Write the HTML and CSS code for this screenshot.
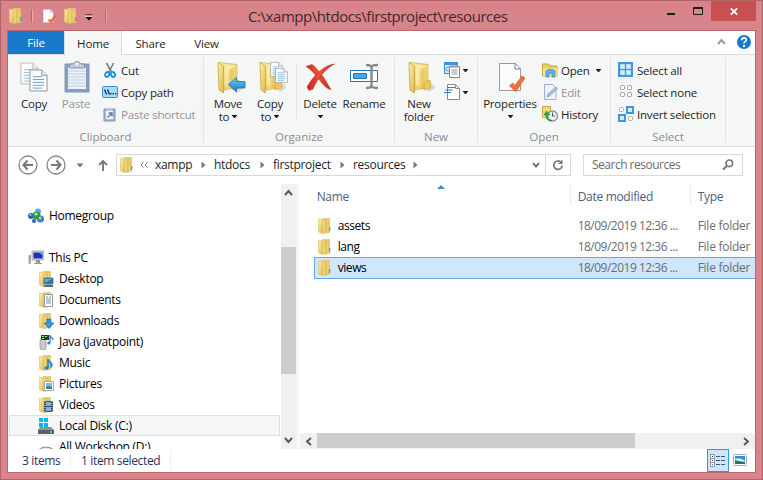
FILE: index.html
```html
<!DOCTYPE html>
<html lang="en">
<head>
<meta charset="utf-8">
<title>C:\xampp\htdocs\firstproject\resources</title>
<link rel="stylesheet" href="styles.css">
</head>
<body>
<svg class="defs" aria-hidden="true">
  <defs>
    <linearGradient id="gold" x1="0" x2="1"><stop offset="0" stop-color="#f9e7a0"/><stop offset=".5" stop-color="#e2bd53"/><stop offset="1" stop-color="#f3d978"/></linearGradient>
    <linearGradient id="gold2" x1="0" x2="1" y1="0" y2="1"><stop offset="0" stop-color="#fff1ae"/><stop offset="1" stop-color="#dcb74a"/></linearGradient>
    <linearGradient id="blue" x1="0" x2="0" y1="0" y2="1"><stop offset="0" stop-color="#68cffc"/><stop offset="1" stop-color="#1478c9"/></linearGradient>
    <linearGradient id="red" x1="0" x2="1"><stop offset="0" stop-color="#c91f14"/><stop offset=".45" stop-color="#f0523d"/><stop offset="1" stop-color="#b52a20"/></linearGradient>
  </defs>
  <symbol id="folder" viewBox="0 0 16 16">
    <path d="M5 .5h7.500v12H5z" fill="#efdb8d" stroke="#dcc273" stroke-width=".7"/>
    <path d="M11.500 7h1.500v8h-1.500z" fill="#edd06a"/><path d="M12 9h1.300v4H12z" fill="#4a9be0"/>
    <path d="M1.500 1L6 2v13.500L1.500 14z" fill="url(#gold2)" stroke="#dfc365" stroke-width=".6"/>
    <path d="M6 2l5.500-1v13.500L6 15.500z" fill="url(#gold)" stroke="#d6b553" stroke-width=".5"/>
  </symbol>
  <symbol id="bigfolder" viewBox="0 0 30 32">
    <path d="M20 29l4-6 3 1 1 3-6 4z" fill="#999" opacity=".35"/>
    <path d="M3 1.500l18 2v23L8 29z" fill="url(#gold2)" stroke="#d3b25a" stroke-width=".8"/>
    <path d="M9 4l10 .5v20H9z" fill="#fff0b5" opacity=".7"/>
    <path d="M13 9l8-5v22l-11 4z" fill="url(#gold)" opacity=".75"/>
    <path d="M17 29v-7l5-3 1.500 1v7z" fill="#eec853" stroke="#c39d3d" stroke-width=".6"/>
    <path d="M2 1.500L7.500 5v27L3 29z" fill="url(#gold2)" stroke="#d0aa4a" stroke-width=".9"/>
  </symbol>
  <symbol id="page" viewBox="0 0 20 24">
    <path d="M1 1h12.500L19 6.500V23H1z" fill="#fff" stroke="#8b8f94"/><path d="M13.500 1v5.500H19" fill="#f2f2f2" stroke="#8b8f94"/>
    <path d="M4 8h10M4 11h12M4 14h12M4 17h12M4 20h10" stroke="#5b9bd5"/>
  </symbol>
  <symbol id="checkpage" viewBox="0 0 28 32">
    <path d="M2 2.500h16l5 5.500v21.500H2z" fill="#fcfcfd" stroke="#97999c"/><path d="M17.500 2.500V8H23" fill="none" stroke="#77797c"/>
    <path d="M12 25l3-3 2.500 2.500L24.500 15l3 2L18.500 30.500z" fill="#ee7140" stroke="#e1602f" stroke-width=".8"/>
  </symbol>
  <symbol id="caret" viewBox="0 0 5 3"><path d="M0 0h5v1H4.500L3 3H2L.5 1H0z" fill="#1e1e1e"/></symbol>
  <symbol id="crumb" viewBox="0 0 5 8"><path d="M.5 .5v7L4.500 4z" fill="#777"/></symbol>
</svg>

<div class="window">
  <header class="titlebar">
    <div class="quick">
      <svg class="i16"><use href="#folder"/></svg><i class="qsep"></i>
      <svg class="i16 qcheck"><use href="#checkpage"/></svg>
      <svg class="i16 qfold"><use href="#folder"/></svg>
      <svg class="qdown" viewBox="0 0 8 7"><path d="M.5 1h7" stroke="#000"/><path d="M0 2h8" stroke="#fff"/><path d="M.5 3h7L4 6.500z"/></svg>
      <i class="qsep"></i>
    </div>
    <h1><span>C:\xampp\htdocs\firstproject\resources</span></h1>
    <div class="controls">
      <svg class="min" viewBox="0 0 8 2"><path d="M0 0h8v2H0z" fill="#1e1e1e"/></svg>
      <svg class="max" viewBox="0 0 10 8"><path d="M.5 1h9v6.500h-9z" fill="none" stroke="#1e1e1e"/><path d="M0 0h10v2H0z" fill="#1e1e1e"/></svg>
      <div class="close"><svg viewBox="0 0 8 7"><path d="M.8 .3l6.400 6.400M7.200 .3L.8 6.700" stroke="#fff" stroke-width="1.700"/></svg></div>
    </div>
  </header>

  <main class="client">
    <nav class="tabs">
      <div class="tab file"><span>File</span></div><div class="tab home"><span>Home</span></div><div class="tab share"><span>Share</span></div><div class="tab view"><span>View</span></div>
      <svg class="collapse" viewBox="0 0 9 7"><path d="M1 6l3.500-4L8 6" fill="none" stroke="#999" stroke-width="1.900"/></svg>
      <svg class="help" viewBox="0 0 14 14"><circle cx="7" cy="7" r="7" fill="#1979ca"/><path d="M4.800 5.200C4.800 2.200 9.500 2.300 9.300 5 9.200 6.700 7 6.500 7 8.500" fill="none" stroke="#fff" stroke-width="1.700"/><path d="M6 10h2v2H6z" fill="#fff"/></svg>
    </nav>

    <section class="ribbon">
      <div class="group clipboard">
        <div class="tools">
          <div class="big w42"><svg class="ico" viewBox="0 0 30 32"><svg x="1" width="19" height="25" opacity=".6"><use href="#page"/></svg><svg x="10" y="7" width="19" height="25"><use href="#page"/></svg></svg><span>Copy</span></div>
          <div class="big w42 off"><svg class="ico" viewBox="0 0 30 32"><path d="M4 3h24v28H4z" fill="#899dc3" stroke="#8294b8"/><path d="M7 6h18v22H7z" fill="#edf2fb"/><path d="M7 10h18M7 13h18M7 16h18M7 19h18M7 22h18M7 25h18" stroke="#bfcbe2"/><path d="M9 3h3q4-5 8 0h3l1 4H8z" fill="#c5cedf" stroke="#8191ae"/><circle cx="16" cy="3" r="1.300" fill="#fff"/></svg><span>Paste</span></div>
          <div class="stack">
            <div class="small"><svg class="i16" viewBox="0 0 16 16"><path d="M4.500 1l5 9M11.500 1L7 10" stroke="#777d85" stroke-width="1.600"/><ellipse cx="5.200" cy="12.500" rx="2" ry="2.600" transform="rotate(30 5.200 12.500)" fill="none" stroke="#168ee0" stroke-width="1.800"/><ellipse cx="11" cy="12.500" rx="2" ry="2.600" transform="rotate(-30 11 12.500)" fill="none" stroke="#168ee0" stroke-width="1.800"/></svg><span>Cut</span></div>
            <div class="small"><svg class="i16" viewBox="0 0 16 16"><rect x=".5" y="2.500" width="15" height="11" rx="1" fill="#a3ddff" stroke="#4389c9"/><path d="M2.500 5.500l2 5M5.500 5.500l2 5" stroke="#1d2b3a" stroke-width="1.300"/><path d="M8 9h1.500v1.500H8zM10.500 9H12v1.500h-1.500zM13 9h1.500v1.500H13z" fill="#26435d"/></svg><span>Copy path</span></div>
            <div class="small off"><svg class="i16" viewBox="0 0 16 16"><path d="M2 3h11v12H2z" fill="#aab6d1" stroke="#8394ba"/><path d="M4 5h7v8H4z" fill="#f6f8fc"/><path d="M5 2.500h5V5H5z" fill="#bbc6dc"/><path d="M5.500 11.500L9.500 7.500M6.500 7h3.500v3.500" stroke="#6279aa" fill="none" stroke-width="1.500"/></svg><span>Paste shortcut</span></div>
          </div>
        </div>
        <div class="caption"><span>Clipboard</span></div>
      </div>

      <div class="group organize">
        <div class="tools">
          <div class="big w42"><svg class="ico shift" viewBox="0 0 30 32"><use href="#bigfolder"/><path d="M12.500 23.500l8-7v4H29v6.500h-8.500v4z" fill="url(#blue)" stroke="#1970b2" stroke-width=".8"/></svg><span>Move</span><span class="second">to<svg class="caret"><use href="#caret"/></svg></span></div>
          <div class="big w42"><svg class="ico shift" viewBox="0 0 30 32"><use href="#bigfolder"/><svg x="12" y="0" width="13" height="17"><use href="#page"/></svg><svg x="17" y="6" width="13" height="17"><use href="#page"/></svg></svg><span>Copy</span><span class="second">to<svg class="caret"><use href="#caret"/></svg></span></div>
          <i class="isep"></i>
          <div class="big w46"><svg class="ico" viewBox="0 0 30 32"><path d="M1 5.500L7 3.500C12 7 15 12 18 15.500C21 20 23 24 26 28.500C21 28 17 22 14.500 19C10 13.500 6 8 1 5.500z" fill="url(#red)" stroke="#b82a20" stroke-width=".5"/><path d="M29.500 3C23 6 13 16 8 28l-4 1.500L2 26C8 15 19 4 29.500 3z" fill="url(#red)" stroke="#b82a20" stroke-width=".5"/></svg><span>Delete</span><svg class="caret lone"><use href="#caret"/></svg></div>
          <div class="big w42"><svg class="ico" viewBox="0 0 30 32"><path d="M1.500 9.500h27v11h-27z" fill="#fff" stroke="#2376ba"/><path d="M4.500 12.500h13v5h-13z" fill="#4da5e4" stroke="#2376ba"/><path d="M17 4q5 0 5.500 2Q23 4 29 4M22.500 5v21M17 27q5 0 5.500-2 .5 2 6.500 2" fill="none" stroke="#888" stroke-width="2.400"/></svg><span>Rename</span></div>
        </div>
        <div class="caption"><span>Organize</span></div>
      </div>

      <div class="group new">
        <div class="tools">
          <div class="big w42"><svg class="ico shift" viewBox="0 0 30 32"><use href="#bigfolder"/></svg><span>New</span><span class="second">folder</span></div>
          <div class="stack">
            <div class="small"><svg class="i16" viewBox="0 0 16 16"><path d="M.5 .5h13v11H.5z" fill="#ddecfb" stroke="#348ad0"/><path d="M0 0h14v3H0z" fill="#3895de"/><circle cx="4" cy="7" r="2" fill="none" stroke="#4899d8"/><path d="M5.500 4.500h10v11h-10z" fill="#fff" stroke="#888"/><path d="M7 3v3M9 3v3M11 3v3M13 3v3M7.500 8h6M7.500 10h6M7.500 12h6" stroke="#9a9a9a"/></svg><svg class="caret"><use href="#caret"/></svg></div>
            <div class="small"><svg class="i16" viewBox="0 0 16 16"><path d="M3.500 .5h8l4 4v11h-12z" fill="#fff" stroke="#8b8b8b"/><path d="M11.500 .5v4h4" fill="none" stroke="#8b8b8b"/><path d="M3 3.500h8M1.500 6h7M0 8.500h7" stroke="#2a7ccc" stroke-width="1.200"/></svg><svg class="caret"><use href="#caret"/></svg></div>
          </div>
        </div>
        <div class="caption"><span>New</span></div>
      </div>

      <div class="group open">
        <div class="tools">
          <div class="big w64"><svg class="ico shift1" viewBox="0 0 30 32"><svg width="29" height="32"><use href="#checkpage"/></svg></svg><span>Properties</span><svg class="caret lone"><use href="#caret"/></svg></div>
          <div class="stack">
            <div class="small"><svg class="i16" viewBox="0 0 16 16"><path d="M.5 2h6l1.500 2H15v10H.5z" fill="#edcd60" stroke="#c8a642"/><path d="M1 6h14v8H1z" fill="#f7e08a"/><path d="M4 15V9q4-3.500 9 0v6h-3v-4H7v4z" fill="#60b5e9" stroke="#368bc4" stroke-width=".8"/></svg><span>Open</span><svg class="caret wide"><use href="#caret"/></svg></div>
            <div class="small off"><svg class="i16" viewBox="0 0 16 16"><path d="M2.500 .5h8l3.500 3.500v11.500H2.500z" fill="#eef2fa" stroke="#9fafd0"/><path d="M5 13l1-3 8-7 1.500 1.500-8 7.500z" fill="#b3c0dc" stroke="#8598c2" stroke-width=".8"/></svg><span>Edit</span></div>
            <div class="small"><svg class="i16" viewBox="0 0 16 16"><path d="M.5 .5h8v11h-8z" fill="#f4d979" stroke="#c8a642"/><circle cx="10.500" cy="10" r="5" fill="#eef1f3" stroke="#8b949c" stroke-width="1.300"/><path d="M10.500 6.500V10H13" stroke="#555" fill="none"/><path d="M9.500 14C6 14 5 11 6 9H8L4.500 5 2 9h2c0 4 2 6 5.500 6z" fill="#26ad30" stroke="#178724" stroke-width=".5"/></svg><span>History</span></div>
          </div>
        </div>
        <div class="caption"><span>Open</span></div>
      </div>

      <div class="group select">
        <div class="tools">
          <div class="stack">
            <div class="small"><svg class="i16" viewBox="0 0 16 16"><path d="M0 0h15v15H0z" fill="#3d96e6"/><path d="M2.500 2.500h4v4h-4zM8.500 2.500h4v4h-4zM2.500 8.500h4v4h-4zM8.500 8.500h4v4h-4z" fill="#d8efff" stroke="#b7dfff"/></svg><span>Select all</span></div>
            <div class="small"><svg class="i16" viewBox="0 0 16 16"><g fill="#fff" stroke="#999"><rect x="2.500" y="1.500" width="4" height="4" rx="1"/><rect x="9.500" y="1.500" width="4" height="4" rx="1"/><rect x="2.500" y="8.500" width="4" height="4" rx="1"/><rect x="9.500" y="8.500" width="4" height="4" rx="1"/></g></svg><span>Select none</span></div>
            <div class="small"><svg class="i16" viewBox="0 0 16 16"><g fill="#fff" stroke="#aaa"><rect x="1.500" y="1.500" width="4" height="4" rx="1"/><rect x="10.500" y="10.500" width="4" height="4" rx="1"/></g><g fill="#d6edff" stroke="#3d96e6" stroke-width="2"><path d="M9 1h6v6H9zM1 9h6v6H1z"/></g></svg><span>Invert selection</span></div>
          </div>
        </div>
        <div class="caption"><span>Select</span></div>
      </div>
    </section>

    <section class="address">
      <svg class="nav" viewBox="0 0 20 20"><circle cx="10" cy="10" r="9" fill="#fff" stroke="#858585" stroke-width="1.300"/><path d="M15 10H6M9.500 5.500L5.500 10l4 4.500" fill="none" stroke="#777" stroke-width="2.100"/></svg>
      <svg class="nav fwd" viewBox="0 0 20 20"><circle cx="10" cy="10" r="9" fill="#fff" stroke="#858585" stroke-width="1.300"/><path d="M5 10h9M10.500 5.500L14.500 10l-4 4.500" fill="none" stroke="#777" stroke-width="2.100"/></svg>
      <svg class="recent" viewBox="0 0 8 5"><path d="M.5 .5h7L4 4.500z" fill="#777"/></svg>
      <svg class="up" viewBox="0 0 10 12"><path d="M5 12V2M1 6l4-4 4 4" fill="none" stroke="#777" stroke-width="1.900"/></svg>
      <div class="path">
        <svg class="i16"><use href="#folder"/></svg>
        <svg class="more" viewBox="0 0 8 6"><path d="M3.500 .5L1 3l2.500 2.500M7.500 .5L5 3l2.500 2.500" fill="none" stroke="#777"/></svg>
        <span class="c1">xampp</span><svg class="crumb"><use href="#crumb"/></svg>
        <span class="c2">htdocs</span><svg class="crumb"><use href="#crumb"/></svg>
        <span class="c3">firstproject</span><svg class="crumb"><use href="#crumb"/></svg>
        <span class="c4">resources</span><svg class="crumb"><use href="#crumb"/></svg>
        <svg class="drop" viewBox="0 0 8 6"><path d="M1 1l3 3.500L7 1" fill="none" stroke="#666" stroke-width="1.800"/></svg>
        <div class="refresh"><svg viewBox="0 0 12 12"><path d="M9 3.200A4.200 4.200 0 1 0 10.200 6.500" fill="none" stroke="#777" stroke-width="1.700"/><path d="M10.500 .5V5H6z" fill="#777"/></svg></div>
      </div>
      <div class="search"><span>Search resources</span><svg viewBox="0 0 12 12"><circle cx="7.300" cy="4.300" r="3.300" fill="none" stroke="#777" stroke-width="1.600"/><path d="M5 7L1 10.500" stroke="#777" stroke-width="2"/></svg></div>
    </section>

    <section class="panes">
      <aside class="tree">
        <div class="node root"><svg class="i16" viewBox="0 0 16 16"><circle cx="10" cy="3.500" r="3" fill="#65a9e6"/><circle cx="3" cy="8" r="3" fill="#2465bd"/><circle cx="12.500" cy="11" r="3.600" fill="#4781d2"/><circle cx="6" cy="13" r="2" fill="#315fb0"/><circle cx="8.500" cy="7.500" r="4" fill="#2c9d42"/><circle cx="8" cy="6" r="1.500" fill="#adecaa"/><circle cx="2.500" cy="7" r="1" fill="#b4d8fa"/><circle cx="12" cy="10" r="1.200" fill="#c3defa"/></svg><span>Homegroup</span></div>
        <div class="node gap"></div>
        <div class="node root"><svg class="i16" viewBox="0 0 16 16"><path d="M4 1h12v9H4z" fill="#d4d7da" stroke="#9b9ea2" stroke-width=".8"/><path d="M5.500 2.500h9v6h-9z" fill="#1830b8"/><path d="M10 2.500h4.500V5z" fill="#6e9ef1"/><path d="M8 10h4v3h2v1H6v-1h2z" fill="#999"/><path d="M.5 5h2.500v9H.5z" fill="#a9adb1"/><path d="M1 6h1v2H1z" fill="#35ca45"/></svg><span>This PC</span></div>
        <div class="node"><svg class="i16" viewBox="0 0 16 16"><use href="#folder"/><path d="M6 7h9v6H6z" fill="#2372bd" stroke="#6d7d8b"/><path d="M7 8h7l-7 4z" fill="#68abe0"/><path d="M7 14h8v2H5z" fill="#536b8b"/></svg><span>Desktop</span></div>
        <div class="node"><svg class="i16" viewBox="0 0 16 16"><use href="#folder"/><path d="M6.500 2.500h8v12h-8z" fill="#fff" stroke="#999"/><path d="M8 5h2M11 5h2M8 7h5M8 9h5M8 11h5" stroke="#7793ae"/></svg><span>Documents</span></div>
        <div class="node"><svg class="i16" viewBox="0 0 16 16"><use href="#folder"/><path d="M9 6h4v4h3l-5 5.500L6 10h3z" fill="#3795e5" stroke="#176bb6" stroke-width=".7"/></svg><span>Downloads</span></div>
        <div class="node"><svg class="i16" viewBox="0 0 16 16"><rect x="2" y="5" width="6" height="11" rx="2.500" fill="#c9cccf" stroke="#8b8e91" stroke-width=".7"/><path d="M3 1h8v5H3z" fill="#333"/><path d="M4 2h2v1H4zM7 2h2v1H7zM4 4h2v1H4z" fill="#8ef48b"/><path d="M12 9V1c0 3 3 2 3 5" fill="none" stroke="#2a81ce" stroke-width="1.300"/><circle cx="10.800" cy="9" r="1.500" fill="#2a81ce"/></svg><span>Java (javatpoint)</span></div>
        <div class="node"><svg class="i16" viewBox="0 0 16 16"><use href="#folder"/><path d="M10 13V4c0 3 4 3 4 6l-1 2" fill="none" stroke="#2a81ce" stroke-width="1.600"/><ellipse cx="8.500" cy="13" rx="2.300" ry="1.700" fill="#2a81ce"/></svg><span>Music</span></div>
        <div class="node"><svg class="i16" viewBox="0 0 16 16"><use href="#folder"/><path d="M6.500 5.500h9v9h-9z" fill="#fff" stroke="#aaa"/><path d="M8 7h6v6H8z" fill="#78b9e8"/><path d="M8 11l2-1 4 1v2H8z" fill="#467b7d"/></svg><span>Pictures</span></div>
        <div class="node"><svg class="i16" viewBox="0 0 16 16"><use href="#folder"/><path d="M6 4h9v11H6z" fill="#414951"/><path d="M8 5h5v4H8zM8 10h5v4H8z" fill="#75b6e1"/><path d="M7 4v11M14 4v11" stroke="#d4d7da" stroke-dasharray="1 1"/></svg><span>Videos</span></div>
        <div class="node current"><svg class="i16" viewBox="0 0 16 16"><path d="M2 9h11l3 3v3H0v-3z" fill="#8b959b"/><path d="M0 12h16v4H0z" fill="#546269"/><path d="M12 13h2v2h-2z" fill="#44de56"/><path d="M1 0h4v4H1zM6 0h4v4H6zM1 5h4v4H1zM6 5h4v4H6z" fill="#00b9ef"/></svg><span>Local Disk (C:)</span></div>
        <div class="node"><svg class="i16" viewBox="0 0 16 16"><path d="M0 11q8-6 16 0v3H0z" fill="#e6e7e8" stroke="#888"/></svg><span>All Workshop (D:)</span></div>
      </aside>
      <div class="vscroll">
        <svg viewBox="0 0 9 7"><path d="M1 6l3.500-4L8 6" fill="none" stroke="#555" stroke-width="1.900"/></svg>
        <div class="vthumb"></div>
        <svg class="down" viewBox="0 0 9 7"><path d="M1 1l3.500 4L8 1" fill="none" stroke="#555" stroke-width="1.900"/></svg>
      </div>
      <div class="files">
        <div class="row head"><div class="name"><span>Name</span><svg class="sort" viewBox="0 0 8 4"><path d="M4 0l4 4H0z" fill="#438fc5"/></svg></div><div class="date"><span>Date modified</span></div><div class="type"><span>Type</span></div></div>
        <div class="row first"><div class="name"><svg class="i16"><use href="#folder"/></svg><span>assets</span></div><div class="date"><span>18/09/2019 12:36 ...</span></div><div class="type"><span>File folder</span></div></div>
        <div class="row"><div class="name"><svg class="i16"><use href="#folder"/></svg><span>lang</span></div><div class="date"><span>18/09/2019 12:36 ...</span></div><div class="type"><span>File folder</span></div></div>
        <div class="row selected"><div class="name"><svg class="i16"><use href="#folder"/></svg><span>views</span></div><div class="date"><span>18/09/2019 12:36 ...</span></div><div class="type"><span>File folder</span></div></div>
        <div class="hscroll">
          <svg viewBox="0 0 7 9"><path d="M6 1L2 4.500 6 8" fill="none" stroke="#555" stroke-width="1.900"/></svg>
          <div class="hthumb"></div>
          <svg class="right" viewBox="0 0 7 9"><path d="M1 1l4 3.500L1 8" fill="none" stroke="#555" stroke-width="1.900"/></svg>
        </div>
      </div>
    </section>

    <footer class="status">
      <div class="count"><span>3 items</span></div><div class="picked"><span>1 item selected</span></div>
      <div class="viewbtn"><svg viewBox="0 0 16 14"><g fill="#fff" stroke="#8c969f"><path d="M.5 .5h4v4h-4zM.5 4.500h4v4h-4zM.5 8.500h4v4h-4z"/></g><path d="M2 2h1v1H2z" fill="#333"/><path d="M2 6h1v1H2z" fill="#d22"/><path d="M2 10h1v1H2z" fill="#27b"/><path d="M6 2.500h4M11 2.500h4M6 6.500h4M11 6.500h4M6 10.500h4M11 10.500h4" stroke="#3e5878"/></svg></div>
      <svg class="thumbs" viewBox="0 0 14 12"><rect x=".5" y=".5" width="13" height="11" rx="1" fill="#fff" stroke="#a5abba"/><path d="M2 2h10v8H2z" fill="#348ccd"/><path d="M2 5q6-2 10 2v1H2z" fill="#d6f0f8"/><path d="M2 6l3 1 7 1v2H2z" fill="#28715c"/></svg>
    </footer>
  </main>
</div>
</body>
</html>
```
FILE: styles.css
```css
* { box-sizing: border-box; }
body { margin: 0; font: 12px/16px "Open Sans", "Noto Sans", sans-serif; color: #1e1e1e; }
svg { display: block; flex: none; }
span { white-space: nowrap; }
.defs { position: absolute; width: 0; height: 0; }
.i16 { width: 16px; height: 16px; }

.window { width: 763px; height: 480px; overflow: hidden; background: #d9848b; border: 1px solid #ae646b; padding: 0 6px; }
.titlebar { height: 29px; display: flex; }
.quick { display: flex; align-items: center; width: 105px; padding-left: 1px; }
.qsep { width: 2px; height: 12px; margin-left: 7px; background: #b5666e; border-right: 1px solid #eba9af; }
.qcheck { margin-left: 8px; }
.qfold { margin-left: 6px; }
.qdown { width: 8px; height: 7px; margin: 4px 5px 0 6px; }
h1 { flex: 1; margin: 0; padding: 4px 0 0 136px; font-size: 15px; line-height: 22px; font-weight: 400; letter-spacing: -.44px; color: #3d292b; }
.controls { display: flex; }
.min { width: 8px; height: 2px; margin: 12px 18px 0 0; }
.max { width: 10px; height: 8px; margin: 6px 8px 0 0; }
.close { width: 45px; height: 20px; margin-right: 0; background: #c75050; display: grid; place-items: center; }
.close svg { width: 8px; height: 7px; }

.client { height: 443px; border: 1px solid #b9686f; background: #fff; display: flex; flex-direction: column; }
.tabs { height: 24px; display: flex; border-bottom: 1px solid #dadbdc; }
.tab { height: 24px; text-align: center; padding-top: 5px; font-size: 11.5px; letter-spacing: -.15px; }
.file { background: #1979ca; color: #fff; width: 56px; height: 23px; padding-top: 4px; }
.home { width: 58px; background: #f5f7f7; border: 1px solid #dadbdc; border-width: 0 1px; }
.share { width: 57px; }
.view { width: 55px; }
.collapse { width: 9px; height: 7px; margin: 7px 11px 0 auto; }
.help { width: 14px; height: 14px; margin: 4px 4px 0 0; }

.ribbon { height: 92px; display: flex; background: #f5f7f7; border-bottom: 1px solid #dadbdc; font-size: 11.5px; }
.group { height: 86px; margin-top: 2px; border-right: 1px solid #e1e3e4; }
.clipboard { width: 196px; }
.organize { width: 191px; }
.new { width: 83px; }
.open { width: 133px; }
.select { width: 115px; }
.tools { display: flex; height: 70px; letter-spacing: -.2px; }
.clipboard .tools { padding-left: 5px; }
.organize .tools { padding-left: 3px; }
.new .tools { padding-left: 3px; }
.select .tools { padding-left: 7px; }
.caption { height: 16px; line-height: 20px; text-align: center; color: #8a8c8e; letter-spacing: 0; }
.big { display: flex; flex-direction: column; align-items: center; padding-top: 4px; }
.big .ico { width: 30px; height: 32px; margin-bottom: 4px; }
.big .shift { transform: translateX(3px); }
.big .shift1 { transform: translateX(2px); }
.big > span { line-height: 13px; height: 13px; }
.second { display: flex; align-items: center; gap: 3px; }
.w42 { width: 42px; }
.w46 { width: 46px; }
.w64 { width: 64px; }
.off { color: #929597; }
.isep { width: 1px; height: 55px; margin: 7px 0 0 5px; background: #e1e3e4; }
.caret { width: 5px; height: 3px; }
.wide { margin-left: 3px; }
.lone { margin-top: 5px; }
.stack { padding-top: 2px; }
.clipboard .stack { padding-left: 5px; }
.new .stack { padding-left: 4px; }
.small { height: 22px; display: flex; align-items: center; gap: 3px; }
.small > span { padding-top: 1px; }

.address { height: 37px; padding: 7px 0 0 10px; display: flex; align-items: flex-start; color: #1e1e1e; }
.nav { width: 20px; height: 20px; margin-top: 1px; }
.fwd { margin-left: 8px; }
.recent { width: 8px; height: 5px; margin: 9px 0 0 10px; }
.up { width: 10px; height: 12px; margin: 5px 0 0 14px; }
.path { width: 455px; height: 22px; margin-left: 8px; border: 1px solid #d9d9d9; display: flex; align-items: center; letter-spacing: -.3px; }
.path .i16 { margin-left: 2px; }
.more { width: 8px; height: 6px; margin-left: 5px; }
.c1 { width: 36px; margin: 0 10px 0 7px; }
.c2 { width: 36px; margin: 0 10px 0 8px; }
.c3 { width: 57px; margin: 0 10px 0 8px; }
.c4 { width: 50px; margin: 0 10px 0 8px; }
.crumb { width: 5px; height: 8px; }
.drop { width: 8px; height: 6px; margin: 0 4px 0 auto; }
.refresh { width: 25px; height: 20px; margin-left: 1px; border-left: 1px solid #d9d9d9; display: grid; place-items: center; }
.refresh svg { width: 12px; height: 12px; }
.search { width: 160px; height: 22px; margin-left: 12px; border: 1px solid #d9d9d9; display: flex; align-items: center; justify-content: space-between; padding: 0 8px; color: #6d6d6d; letter-spacing: -.5px; }
.search span { letter-spacing: -.5px; }
.search svg { width: 12px; height: 12px; }

.panes { height: 265px; display: flex; }
.tree { width: 273px; height: 265px; padding: 21px 1px 0; overflow: hidden; letter-spacing: -.27px; color: #000; }
.node { height: 21px; display: flex; align-items: center; gap: 5px; padding-left: 29px; }
.node span { padding-top: 1px; }
.root { padding-left: 19px; }
.current { background: #f5f7f7; outline: 1px solid #dedede; outline-offset: -1px; }
.vscroll { width: 16px; background: #f0f0f0; display: flex; flex-direction: column; align-items: center; }
.vscroll svg { width: 9px; height: 7px; margin-top: 5px; }
.vthumb { width: 15px; height: 127px; margin: 51px 1px 0 0; background: #cdcdcd; }
.vscroll .down { margin: auto 0 5px; }
.files { width: 458px; margin-left: 1px; border-left: 1px solid #f0f0f0; padding-left: 1px; display: flex; flex-direction: column; letter-spacing: -.4px; }
.row { height: 21px; display: grid; grid-template-columns: 257px 120px 64px; margin-left: 14px; flex: none; align-items: center; color: #6d6d6d; overflow: hidden; }
.row .name { display: flex; align-items: center; gap: 5px; padding-left: 3px; color: #000; }
.row .date { padding-left: 7px; letter-spacing: -.5px; }
.row .type { padding-left: 7px; letter-spacing: -.25px; }
.row.head { height: 26px; align-items: start; color: #4c607a; }
.head .name, .head .date, .head .type { height: 22px; padding-top: 5px; color: #4c607a; letter-spacing: -.3px; }
.head .name, .head .date { border-right: 1px solid #e5edf5; }
.head .name { position: relative; align-items: flex-start; }
.sort { position: absolute; left: 123px; top: 1px; width: 8px; height: 4px; }
.first { margin-top: 5px; }
.selected { height: 22px; background: #cfe6fd; border: 1px solid #65a6e3; border-right: 0; grid-template-columns: 256px 120px 64px; }
.selected .name { padding-left: 2px; }
.hscroll { height: 16px; margin-top: auto; background: #f0f0f0; display: flex; align-items: center; }
.hscroll svg { width: 7px; height: 9px; margin-left: 5px; }
.hthumb { width: 318px; height: 15px; margin: 0 0 1px 5px; background: #cdcdcd; }
.hscroll .right { margin: 0 5px 0 auto; }

.status { height: 23px; display: flex; color: #28345c; letter-spacing: -.35px; line-height: 23px; }
.count { width: 63px; height: 20px; padding-left: 14px; border-right: 1px solid #f0f0f0; }
.picked { width: 100px; height: 20px; padding-left: 10px; border-right: 1px solid #f0f0f0; }
.viewbtn { width: 22px; height: 23px; margin-left: 536px; border: 1px solid #2a9bdb; background: #cce8f8; display: grid; place-items: center; }
.viewbtn svg { width: 16px; height: 14px; }
.thumbs { width: 14px; height: 12px; margin: 5px 0 0 4px; }
```
